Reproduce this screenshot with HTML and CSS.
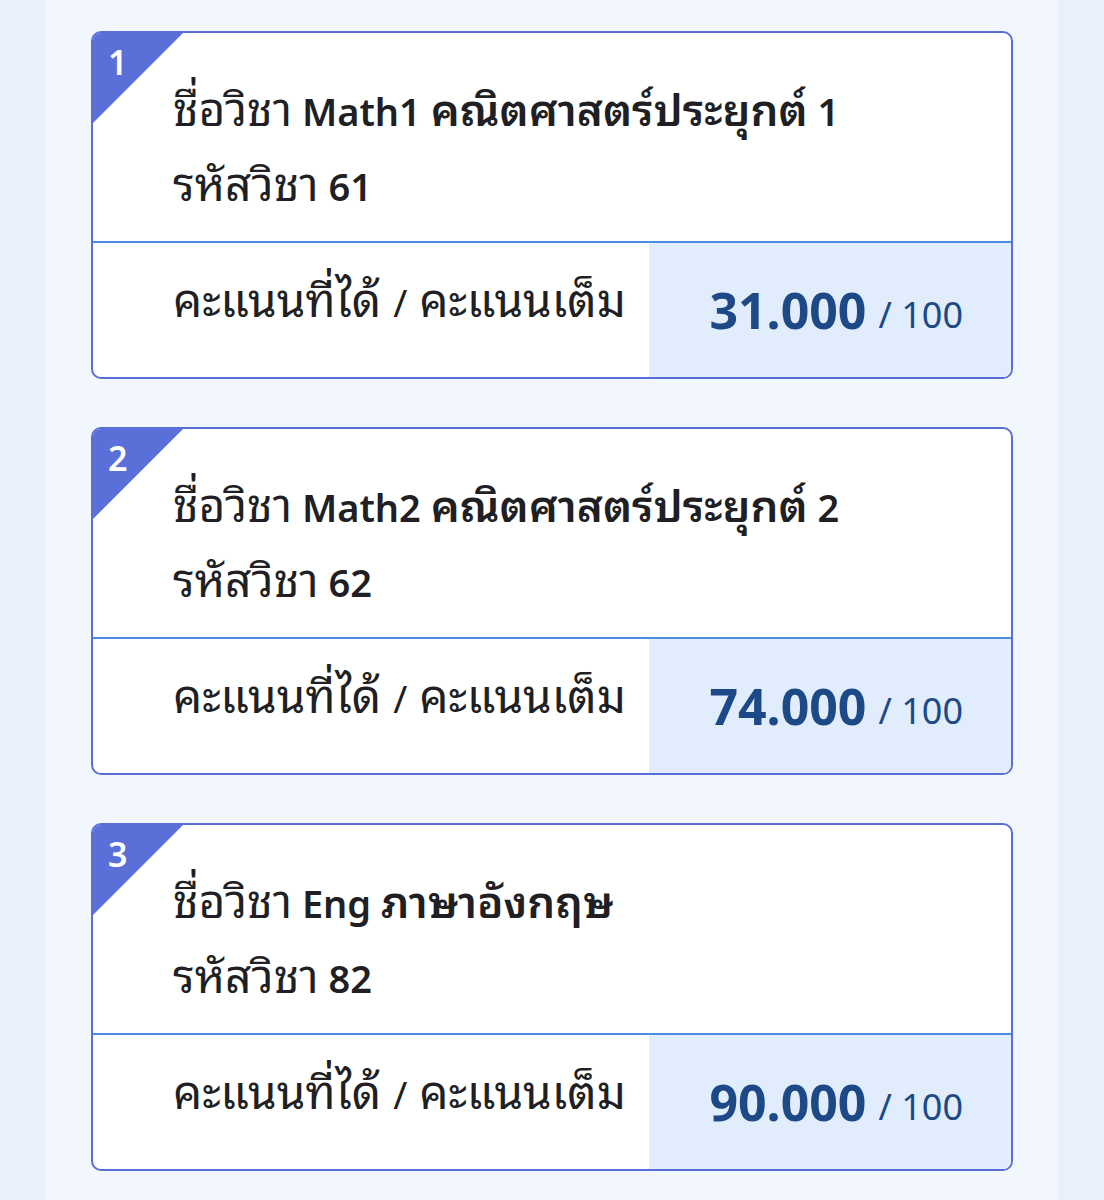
FILE: index.html
```html
<!DOCTYPE html>
<html lang="th">
<head>
  <meta charset="UTF-8" />
  <meta name="viewport" content="width=device-width, initial-scale=1.0"/>
  <title>ผลคะแนน</title>
  <link rel="stylesheet" href="styles.css">
</head>
<body>
  <div class="panel">

    <div class="card">
      <div class="badge"><span>1</span></div>
      <div class="card-head">
        <div class="line"><span class="th">ชื่อวิชา</span> <b>Math1 <span class="th">คณิตศาสตร์ประยุกต์</span> 1</b></div>
        <div class="line"><span class="th">รหัสวิชา</span> <b>61</b></div>
      </div>
      <div class="card-foot">
        <div class="label"><span class="th">คะแนนที่ได้ </span>/<span class="th"> คะแนนเต็ม</span></div>
        <div class="score"><b>31.000</b> <span>/ 100</span></div>
      </div>
    </div>

    <div class="card">
      <div class="badge"><span>2</span></div>
      <div class="card-head">
        <div class="line"><span class="th">ชื่อวิชา</span> <b>Math2 <span class="th">คณิตศาสตร์ประยุกต์</span> 2</b></div>
        <div class="line"><span class="th">รหัสวิชา</span> <b>62</b></div>
      </div>
      <div class="card-foot">
        <div class="label"><span class="th">คะแนนที่ได้ </span>/<span class="th"> คะแนนเต็ม</span></div>
        <div class="score"><b>74.000</b> <span>/ 100</span></div>
      </div>
    </div>

    <div class="card">
      <div class="badge"><span>3</span></div>
      <div class="card-head">
        <div class="line"><span class="th">ชื่อวิชา</span> <b>Eng <span class="th">ภาษาอังกฤษ</span></b></div>
        <div class="line"><span class="th">รหัสวิชา</span> <b>82</b></div>
      </div>
      <div class="card-foot">
        <div class="label"><span class="th">คะแนนที่ได้ </span>/<span class="th"> คะแนนเต็ม</span></div>
        <div class="score"><b>90.000</b> <span>/ 100</span></div>
      </div>
    </div>

  </div>
</body>
</html>
```

FILE: styles.css
```css
* {
  box-sizing: border-box;
  margin: 0;
  padding: 0;
}

body {
  background: #e8f0fa;
  font-family: 'Noto Sans', 'Noto Sans Thai Looped', sans-serif;
  color: #1f1f24;
}

.panel {
  margin: 0 46px 0 45px;
  padding: 31px 45px 40px 46px;
  background: #f2f7fd;
  min-height: 1200px;
  display: flex;
  flex-direction: column;
  gap: 48px;
}

.card {
  position: relative;
  background: #ffffff;
  border: 2px solid #5a6fd6;
  border-radius: 10px;
  overflow: hidden;
}

.badge {
  position: absolute;
  top: 0;
  left: 0;
  width: 90px;
  height: 90px;
  background: #5a6fd8;
  clip-path: polygon(0 0, 100% 0, 0 100%);
}

.badge span {
  position: absolute;
  top: 9px;
  left: 15px;
  color: #ffffff;
  font-size: 34px;
  font-weight: 600;
  line-height: 40px;
}

/* thai runs render smaller than latin, bump them up */
.th {
  font-family: 'Noto Sans Thai Looped', 'Noto Sans', sans-serif;
  font-size: 46px;
  line-height: 1;
}

.card-head {
  padding: 41px 20px 17px 80px;
  border-bottom: 2px solid #4a8ede;
}

.line {
  font-size: 38px;
  line-height: 75px;
}

.line b {
  font-weight: 600;
}

.line b .th {
  font-size: 44px;
}

.card-foot {
  display: flex;
  height: 134px;
}

.label {
  flex: 1;
  padding-left: 80px;
  font-size: 38px;
  line-height: 118px;
  white-space: pre;
}

.score {
  width: 362px;
  background: #e1edfd;
  display: flex;
  align-items: center;
  justify-content: flex-end;
  gap: 12px;
  padding-right: 48px;
  color: #1d4a86;
}

.score b {
  font-size: 50px;
  font-weight: 700;
}

.score span {
  font-size: 36px;
  padding-top: 8px;
}
```
